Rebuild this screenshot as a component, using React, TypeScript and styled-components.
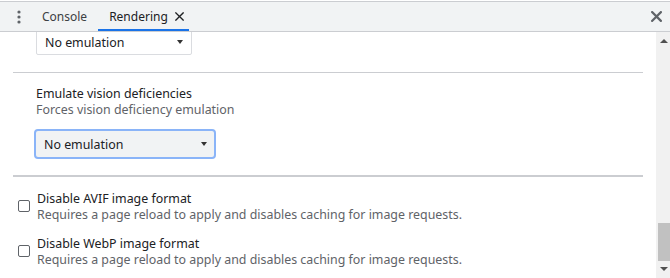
import React, { FC } from "react";
import styled, { createGlobalStyle } from "styled-components";

const GlobalStyle = createGlobalStyle`
  html, body {
    margin: 0;
    padding: 0;
    background: #ffffff;
    overflow: hidden;
  }
  body {
    font-family: "Noto Sans", "Open Sans", sans-serif;
    font-size: 12px;
    color: #202124;
  }
`;

const Frame = styled.div`
  height: 278px;
  display: flex;
  flex-direction: column;
  padding-top: 1px;
  box-sizing: border-box;
`;

const Toolbar = styled.header`
  flex: none;
  height: 29px;
  display: flex;
  align-items: stretch;
  background: #f1f3f4;
  border-top: 1px solid #cbcdd1;
  border-bottom: 1px solid #cbcdd1;
`;

const MenuButton = styled.button`
  width: 24px;
  margin-left: 7px;
  border: 0;
  padding: 0;
  background: none;
  display: flex;
  align-items: center;
  justify-content: center;
  color: #5f6368;
`;

const Tab = styled.div<{ $active?: boolean }>`
  display: flex;
  align-items: center;
  gap: 7px;
  padding: 2px ${p => (p.$active ? "5px" : "11px")} 0 11px;
  color: ${p => (p.$active ? "#202124" : "#3c4043")};
  border-bottom: 2px solid ${p => (p.$active ? "#1a73e8" : "transparent")};
  box-sizing: border-box;
  white-space: nowrap;
`;

const TabClose = styled.span`
  display: flex;
  align-items: center;
  width: 9px;
  height: 9px;
  color: #202124;
`;

const Spacer = styled.div`
  flex: 1;
`;

const CloseButton = styled.button`
  width: 28px;
  border: 0;
  padding: 0;
  background: none;
  display: flex;
  align-items: center;
  justify-content: center;
  color: #5f6368;
`;

const Body = styled.div`
  flex: 1;
  display: flex;
  min-height: 0;
  font-size: 12.4px;
`;

const Panel = styled.div`
  flex: 1;
  overflow: hidden;
`;

const Section = styled.section<{ $top?: number; $bottom?: number }>`
  padding: ${p => p.$top ?? 0}px 0 ${p => p.$bottom ?? 0}px 36px;
`;

const Divider = styled.hr<{ $thick?: boolean }>`
  margin: 0 13px;
  border: 0;
  height: ${p => (p.$thick ? "2px" : "1px")};
  background: #cbcdd1;
`;

const Title = styled.div`
  line-height: 17px;
  color: #202124;
  white-space: nowrap;
`;

const Description = styled.div`
  line-height: 16px;
  color: #5f6368;
  white-space: nowrap;
`;

const Select = styled.div<{ $width: number; $focused?: boolean }>`
  width: ${p => p.$width}px;
  height: ${p => (p.$focused ? 30 : 26)}px;
  margin-top: ${p => (p.$focused ? 0 : -3)}px;
  margin-left: ${p => (p.$focused ? -2 : 0)}px;
  box-sizing: border-box;
  display: flex;
  align-items: center;
  justify-content: space-between;
  padding: 0 ${p => (p.$focused ? 7 : 8)}px 0 8px;
  border: ${p => (p.$focused ? "2px solid #8ab4f8" : "1px solid #dadce0")};
  border-radius: ${p => (p.$focused ? 4 : 2)}px;
  background: ${p => (p.$focused ? "#f1f3f4" : "#ffffff")};
  color: #202124;
`;

const Caret = styled.span`
  width: 0;
  height: 0;
  border-left: 3.5px solid transparent;
  border-right: 3.5px solid transparent;
  border-top: 4px solid #333333;
`;

const CheckRow = styled.label`
  display: flex;
  align-items: flex-start;
  gap: 7px;
  padding-left: 18px;
  margin-top: 13px;
  & + & {
    margin-top: 12px;
  }
`;

const Box = styled.span`
  flex: none;
  width: 12px;
  height: 12px;
  margin-top: 10px;
  box-sizing: border-box;
  border: 1px solid #5f6368;
  border-radius: 2px;
  background: #ffffff;
`;

const Scrollbar = styled.div`
  flex: none;
  width: 14px;
  background: #f1f1f1;
  display: flex;
  flex-direction: column;
  align-items: center;
`;

const Arrow = styled.span<{ $down?: boolean }>`
  flex: none;
  margin: ${p => (p.$down ? "6px 0 7px 2px" : "7px 0 0 2px")};
  width: 0;
  height: 0;
  border-left: 4px solid transparent;
  border-right: 4px solid transparent;
  ${p =>
    p.$down
      ? "border-top: 4px solid #505050;"
      : "border-bottom: 4px solid #505050;"}
`;

const Track = styled.div`
  flex: 1;
  width: 100%;
  display: flex;
  flex-direction: column;
  justify-content: flex-end;
  padding-left: 2px;
  box-sizing: border-box;
`;

const Thumb = styled.div`
  height: 38px;
  background: #c1c1c1;
`;

const Kebab: FC = () => (
  <svg width="4" height="14" viewBox="0 0 4 14">
    <circle cx="2" cy="2" r="1.6" fill="currentColor" />
    <circle cx="2" cy="7" r="1.6" fill="currentColor" />
    <circle cx="2" cy="12" r="1.6" fill="currentColor" />
  </svg>
);

const Cross: FC<{ size: number; stroke: number }> = ({ size, stroke }) => (
  <svg width={size} height={size} viewBox="0 0 10 10">
    <path
      d="M1 1 L9 9 M9 1 L1 9"
      stroke="currentColor"
      strokeWidth={stroke}
      strokeLinecap="square"
    />
  </svg>
);

const CheckOption: FC<{ title: string; description: string }> = ({
  title,
  description,
}) => (
  <CheckRow>
    <Box />
    <div>
      <Title>{title}</Title>
      <Description>{description}</Description>
    </div>
  </CheckRow>
);

const App: FC = () => (
  <>
    <GlobalStyle />
    <Frame>
      <Toolbar>
        <MenuButton>
          <Kebab />
        </MenuButton>
        <Tab>Console</Tab>
        <Tab $active>
          Rendering
          <TabClose>
            <Cross size={9} stroke={1.5} />
          </TabClose>
        </Tab>
        <Spacer />
        <CloseButton>
          <Cross size={11} stroke={2} />
        </CloseButton>
      </Toolbar>
      <Body>
        <Panel>
          <Section $bottom={17}>
            <Select $width={156}>
              No emulation
              <Caret />
            </Select>
          </Section>
          <Divider />
          <Section $top={12}>
            <Title>Emulate vision deficiencies</Title>
            <Description>Forces vision deficiency emulation</Description>
          </Section>
          <Section $top={11} $bottom={16}>
            <Select $width={182} $focused>
              No emulation
              <Caret />
            </Select>
          </Section>
          <Divider $thick />
          <CheckOption
            title="Disable AVIF image format"
            description="Requires a page reload to apply and disables caching for image requests."
          />
          <CheckOption
            title="Disable WebP image format"
            description="Requires a page reload to apply and disables caching for image requests."
          />
        </Panel>
        <Scrollbar>
          <Arrow />
          <Track>
            <Thumb />
          </Track>
          <Arrow $down />
        </Scrollbar>
      </Body>
    </Frame>
  </>
);

export default App;
